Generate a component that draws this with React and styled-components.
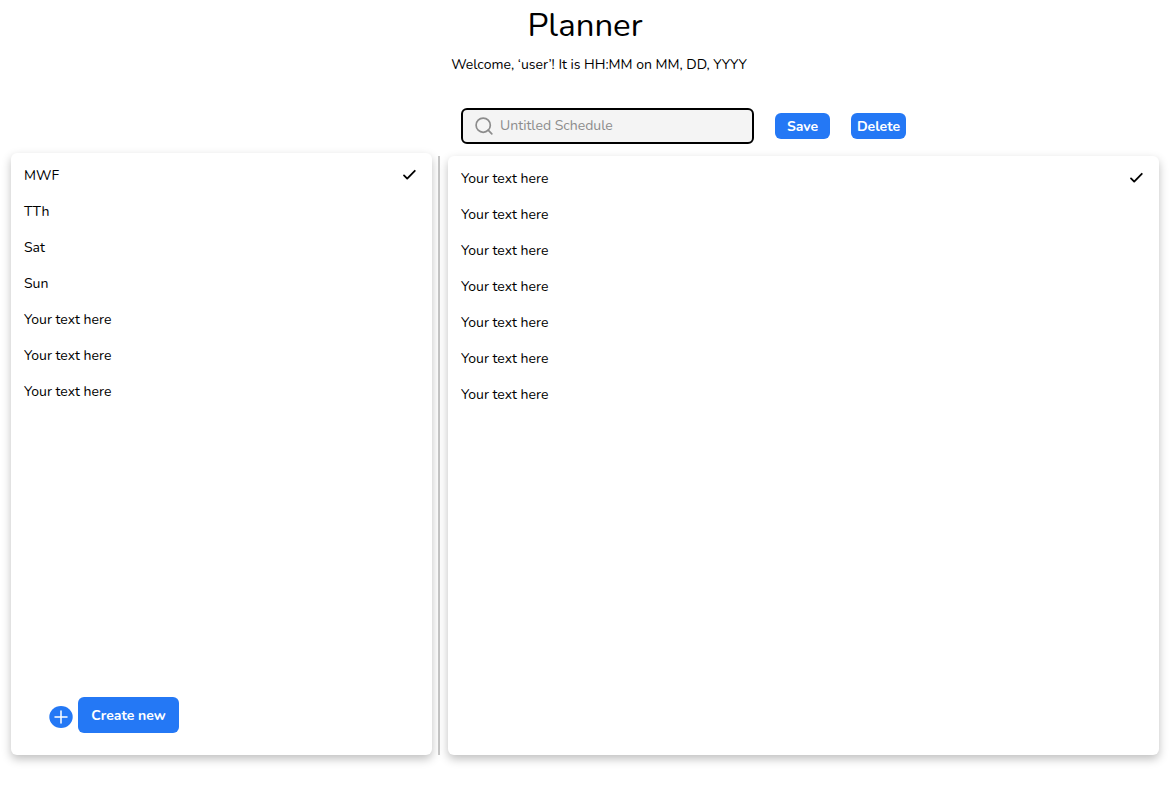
import React, { useState } from "react";
import styled, { createGlobalStyle } from "styled-components";

const GlobalStyle = createGlobalStyle`
  *, *::before, *::after { box-sizing: border-box; }
  body {
    margin: 0;
    background: #fff;
    color: #000;
    font-family: Nunito, Lato, "Noto Sans", sans-serif;
    font-size: 14px;
    line-height: 20px;
  }
  button, input { font: inherit; }
`;

const Page = styled.div`
  display: flex;
  flex-direction: column;
  min-height: 100vh;
  padding: 0 12px 40px 11px;
`;

const Header = styled.header`
  display: flex;
  flex-direction: column;
  align-items: center;
  gap: 5px;
  padding-top: 2px;
`;

const Title = styled.h1`
  margin: 0;
  font-size: 33px;
  font-weight: 400;
  line-height: 48px;
`;

const Welcome = styled.p`
  margin: 0;
  padding-left: 28px;
`;

const Workspace = styled.main`
  flex: 1;
  display: grid;
  grid-template-columns: minmax(0, 421fr) 4px minmax(0, 711fr);
  grid-template-rows: auto 1fr;
  column-gap: 6px;
  padding-top: 33px;
`;

const Toolbar = styled.form`
  grid-column: 3;
  display: flex;
  align-items: center;
  gap: 21px;
  padding: 0 13px 12px;
`;

const SearchBox = styled.label`
  display: flex;
  align-items: center;
  gap: 7px;
  width: 293px;
  height: 36px;
  padding: 0 12px;
  border: 2px solid #000;
  border-radius: 6px;
  background: #f4f4f4;
  color: #8c8c8c;
`;

const SearchInput = styled.input`
  flex: 1;
  min-width: 0;
  padding: 0;
  border: 0;
  outline: 0;
  background: transparent;
  color: #000;
  &::placeholder { color: #8c8c8c; opacity: 1; }
`;

const Button = styled.button`
  width: ${(p) => (p.$large ? "101px" : "55px")};
  height: ${(p) => (p.$large ? "36px" : "26px")};
  padding: 2px 0 0;
  border: 0;
  border-radius: 6px;
  background: #2478f5;
  color: #fff;
  font-weight: 700;
  cursor: pointer;
`;

const IconButton = styled.button`
  display: flex;
  padding: 0;
  border: 0;
  background: none;
  cursor: pointer;
`;

const Panel = styled.section`
  display: flex;
  flex-direction: column;
  justify-content: space-between;
  padding: 5px 0 22px;
  border-radius: 6px;
  background: #fff;
  box-shadow: 0 4px 10px rgba(0, 0, 0, 0.25);
`;

const SidePanel = styled(Panel)`
  margin-top: -3px;
`;

const Divider = styled.div`
  border-left: 2px solid #c4c4c4;
`;

const List = styled.ul`
  margin: 0;
  padding: 0;
  list-style: none;
`;

const Row = styled.button`
  display: flex;
  align-items: center;
  justify-content: space-between;
  width: 100%;
  height: 36px;
  padding: 0 15px 0 13px;
  border: 0;
  background: none;
  color: #000;
  text-align: left;
  cursor: pointer;
`;

const CreateBar = styled.div`
  display: flex;
  align-items: center;
  gap: 5px;
  padding-left: 38px;
`;

const CheckIcon = () => (
  <svg width="16" height="16" viewBox="0 0 16 16" fill="none" aria-hidden="true">
    <path d="M3 7.4 6.2 10.6 13.8 2.8" stroke="#000" strokeWidth="1.8" strokeLinecap="round" strokeLinejoin="round" />
  </svg>
);

const SearchIcon = () => (
  <svg width="18" height="18" viewBox="0 0 18 18" fill="none" aria-hidden="true">
    <circle cx="8.2" cy="8.2" r="7.1" stroke="currentColor" strokeWidth="1.7" />
    <path d="m13.2 13.2 3.6 3.6" stroke="currentColor" strokeWidth="1.7" strokeLinecap="round" />
  </svg>
);

const PlusIcon = () => (
  <svg width="24" height="26" viewBox="0 0 24 26" fill="none" aria-hidden="true">
    <ellipse cx="12" cy="15" rx="11.7" ry="11" fill="#2478f5" />
    <path d="M12 9v12M6 15h12" stroke="#fff" strokeWidth="1.5" strokeLinecap="round" />
  </svg>
);

const schedules = ["MWF", "TTh", "Sat", "Sun", "Your text here", "Your text here", "Your text here"];
const tasks = Array(7).fill("Your text here");

function SelectList({ items }) {
  const [selected, setSelected] = useState(0);
  return (
    <List>
      {items.map((item, i) => (
        <li key={i}>
          <Row type="button" aria-pressed={i === selected} onClick={() => setSelected(i)}>
            {item}
            {i === selected && <CheckIcon />}
          </Row>
        </li>
      ))}
    </List>
  );
}

export default function App() {
  return (
    <>
      <GlobalStyle />
      <Page>
        <Header>
          <Title>Planner</Title>
          <Welcome>Welcome, ‘user’! It is HH:MM on MM, DD, YYYY</Welcome>
        </Header>
        <Workspace>
          <Toolbar onSubmit={(e) => e.preventDefault()}>
            <SearchBox htmlFor="schedule-name">
              <SearchIcon />
              <SearchInput id="schedule-name" type="text" aria-label="Schedule name" placeholder="Untitled Schedule" />
            </SearchBox>
            <Button type="submit">Save</Button>
            <Button type="button">Delete</Button>
          </Toolbar>
          <SidePanel aria-label="Schedules">
            <SelectList items={schedules} />
            <CreateBar>
              <IconButton type="button" aria-label="Add schedule">
                <PlusIcon />
              </IconButton>
              <Button type="button" $large>Create new</Button>
            </CreateBar>
          </SidePanel>
          <Divider />
          <Panel aria-label="Tasks">
            <SelectList items={tasks} />
          </Panel>
        </Workspace>
      </Page>
    </>
  );
}
